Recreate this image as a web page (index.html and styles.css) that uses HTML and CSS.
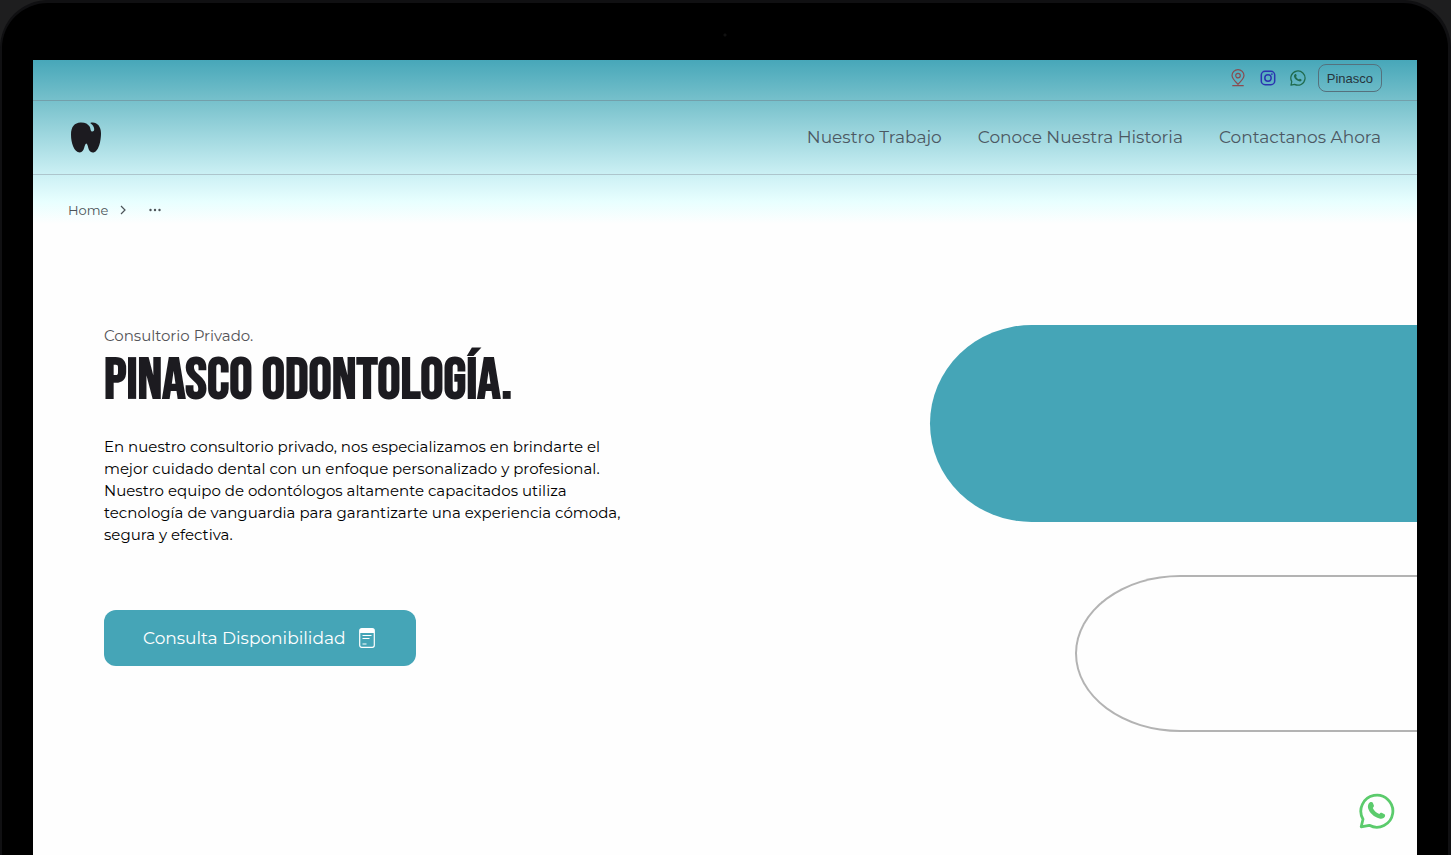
FILE: index.html
```html
<!DOCTYPE html>
<html lang="es">
<head>
<meta charset="utf-8">
<meta name="viewport" content="width=device-width, initial-scale=1">
<title>Pinasco Odontología</title>
<link rel="stylesheet" href="styles.css">
</head>
<body>
<svg class="defs" aria-hidden="true">
  <symbol id="whatsapp" viewBox="0 0 36 36">
    <path d="M2.2 33.8 4 26.2A16 16 0 1 1 10.300 32.300Z" fill="none" stroke="currentColor" stroke-width="2.800" stroke-linejoin="round"/>
    <path d="M11 9.300c1-.6 2.400-.5 2.800.5l1.100 2.800c.2.800-.3 1.500-1.100 2.400 1.300 3 3.700 4.900 6.500 6.100.9-1.100 1.500-1.600 2.300-1.300l2.900 1.400c.9.500.7 2 .1 2.900-1 1.500-3.100 2-5.100 1.400C14.500 23.700 10.400 19.500 9.100 15.200c-.6-2.200.2-4.700 1.900-5.900z" fill="currentColor"/>
  </symbol>
</svg>
<div class="device">
  <div class="camera"></div>
  <div class="screen">
    <header class="header">
      <div class="topbar">
        <a class="social social-map" href="#" aria-label="Ubicación">
          <svg viewBox="0 0 16 18" fill="none" stroke="currentColor" stroke-width="1.200"><path d="M8 15.200C4.500 12 2 9.500 2 6.600a6 6 0 0 1 12 0c0 2.900-2.500 5.400-6 8.600zM2.300 16.600h11.400"/><circle cx="8" cy="6.600" r="2.300"/></svg>
        </a>
        <a class="social social-instagram" href="#" aria-label="Instagram">
          <svg viewBox="0 0 16 16" fill="none" stroke="currentColor" stroke-width="1.500"><rect x="1.300" y="1.300" width="13.400" height="13.400" rx="3.800"/><circle cx="8" cy="8" r="3.200"/><circle cx="11.900" cy="4.100" r=".9" fill="currentColor" stroke="none"/></svg>
        </a>
        <a class="social social-whatsapp" href="#" aria-label="WhatsApp"><svg><use href="#whatsapp"/></svg></a>
        <button class="brand-button" type="button">Pinasco</button>
      </div>
      <div class="navbar">
        <a class="logo" href="#" aria-label="Pinasco">
          <svg viewBox="0 0 30 31"><path d="M9.500.5C14 .3 17 2 18.600 4.500c1 1.600.6 4.200 2 4.900 1.300.6 2.700-.5 2.600-2.300-.1-2.800-2-4.800-4-6.200C25-.7 30 3.600 30 11.200c0 7.500-2.300 19.300-8.300 19.300-5.200 0-4.300-9-6.400-9s-1.500 9-6.500 9C3 30.500 0 20.700 0 12.500 0 4.800 3.600.7 9.500.5z" fill="#1c1b20"/></svg>
        </a>
        <nav class="menu">
          <a href="#">Nuestro Trabajo</a>
          <a href="#">Conoce Nuestra Historia</a>
          <a href="#">Contactanos Ahora</a>
        </nav>
      </div>
      <nav class="breadcrumb" aria-label="Ruta">
        <a href="#">Home</a>
        <svg class="chevron" viewBox="0 0 8 10"><path d="m2 1 4 4-4 4" fill="none" stroke="currentColor" stroke-width="1.200"/></svg>
        <svg class="dots" viewBox="0 0 12 4" fill="currentColor"><circle cx="1.500" cy="2" r="1.200"/><circle cx="6" cy="2" r="1.200"/><circle cx="10.500" cy="2" r="1.200"/></svg>
      </nav>
    </header>
    <main class="hero">
      <section class="copy">
        <p class="kicker">Consultorio Privado.</p>
        <h1 class="title">PINASCO ODONTOLOGÍA.</h1>
        <p class="lead">En nuestro consultorio privado, nos especializamos en brindarte el<br>mejor cuidado dental con un enfoque personalizado y profesional.<br>Nuestro equipo de odontólogos altamente capacitados utiliza<br>tecnología de vanguardia para garantizarte una experiencia cómoda,<br>segura y efectiva.</p>
        <button class="cta" type="button">
          <span>Consulta Disponibilidad</span>
          <svg viewBox="0 0 16 20"><rect x=".7" y=".7" width="14.600" height="18.600" rx="2" fill="none" stroke="currentColor" stroke-width="1.200"/><path d="M1 1h14v4H1z" fill="currentColor"/><path d="M3.500 7.500h9M3.500 10.500h7M3.500 16h4" stroke="currentColor" stroke-width="1.200"/></svg>
        </button>
      </section>
      <div class="shapes" aria-hidden="true">
        <div class="shape-solid"></div>
        <div class="shape-outline"></div>
      </div>
    </main>
  </div>
</div>
<a class="chat" href="#" aria-label="Escribir por WhatsApp"><svg><use href="#whatsapp"/></svg></a>
</body>
</html>
```
FILE: styles.css
```css
* { box-sizing: border-box; }
body {
  margin: 0;
  background: #1e1e1f;
  color: #000;
  font-family: Montserrat, Inter, sans-serif;
}
a { color: inherit; text-decoration: none; }
button { font: inherit; cursor: pointer; }
svg { display: block; width: 100%; height: 100%; }
.defs { position: absolute; width: 0; height: 0; }

.device {
  display: flex;
  flex-direction: column;
  min-height: 100vh;
  padding: 0 31px;
  border: solid #101012;
  border-width: 3px 3px 0 2px;
  border-radius: 48px 48px 0 0;
  background: #000;
}
.camera {
  height: 57px;
  background: radial-gradient(circle at 50% 32px, #111 1px, transparent 2px);
}
.screen {
  flex: 1;
  background: #fefefe;
  overflow: hidden;
}

.header {
  background: linear-gradient(#47a7b9 0, #76c0cb 40px, #cbf0f4 114px, #e8ffff 142px, #fefefe 164px);
}
.topbar {
  display: flex;
  justify-content: flex-end;
  align-items: center;
  gap: 14px;
  height: 41px;
  padding: 0 35px 4px 0;
  border-bottom: 1px solid #739faa;
}
.social { width: 16px; height: 16px; }
.social-map { height: 18px; color: #8a4b50; }
.social-instagram { color: #2b35b0; }
.social-whatsapp { color: #206b4e; }
.brand-button {
  height: 28px;
  padding: 0 8px;
  margin-left: -2px;
  border: 1px solid #55717d;
  border-radius: 8px;
  background: transparent;
  color: #26343c;
  font-family: "Liberation Sans", Arial, sans-serif;
  font-size: 13px;
}
.navbar {
  display: flex;
  justify-content: space-between;
  align-items: center;
  height: 74px;
  padding: 0 36px 0 38px;
  border-bottom: 1px solid #adc5cc;
}
.logo { width: 30px; height: 31px; }
.menu {
  display: flex;
  gap: 36px;
  padding-bottom: 2px;
  color: #4c5862;
  font-size: 17px;
}
.breadcrumb {
  display: flex;
  align-items: center;
  height: 70px;
  padding-left: 35px;
  color: #4c5358;
  font-size: 13px;
}
.chevron { width: 8px; height: 10px; margin: 0 22px 0 11px; }
.dots { width: 12px; height: 4px; }

.hero {
  display: flex;
  justify-content: space-between;
  padding-top: 80px;
}
.copy { padding-left: 71px; }
.kicker {
  margin: 0;
  color: #545458;
  font-size: 15px;
  line-height: 22px;
}
.title {
  margin: 0;
  color: #1c1b20;
  font-family: "Bebas Neue", "Liberation Sans Narrow", sans-serif;
  font-size: 58px;
  font-weight: 700;
  line-height: 68px;
}
.lead {
  margin: 21px 0 0;
  font-size: 15px;
  line-height: 22px;
}
.cta {
  display: flex;
  align-items: center;
  gap: 13px;
  width: 312px;
  height: 56px;
  margin-top: 64px;
  padding: 0 39px;
  border: 0;
  border-radius: 12px;
  background: #45a5b7;
  color: #fff;
  font-size: 17px;
}
.cta svg { flex: none; width: 16px; height: 20px; }

.shapes {
  display: flex;
  flex-direction: column;
  align-items: flex-end;
  gap: 53px;
  width: 35.2%;
}
.shape-solid {
  width: 100%;
  height: 197px;
  border-radius: 102px 0 0 102px / 99px 0 0 99px;
  background: #45a5b7;
}
.shape-outline {
  width: 70.3%;
  height: 157px;
  border: 2px solid #b3b3b3;
  border-right: 0;
  border-radius: 106px 0 0 106px / 79px 0 0 79px;
}

.chat {
  position: fixed;
  right: 56px;
  bottom: 26px;
  width: 36px;
  height: 36px;
  color: #5bcb6c;
}
```
